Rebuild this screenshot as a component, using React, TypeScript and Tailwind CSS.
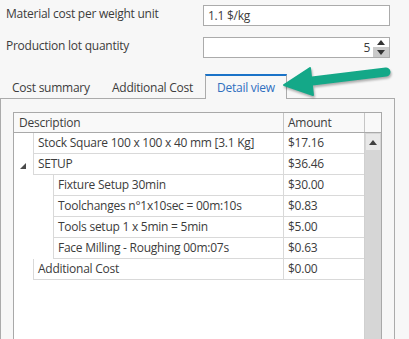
import React from "react";

type Row = { label: string; amount: string; level: number; expander?: boolean };

const rows: Row[] = [
  { label: "Stock Square 100 x 100 x 40 mm [3.1 Kg]", amount: "$17.16", level: 1 },
  { label: "SETUP", amount: "$36.46", level: 1, expander: true },
  { label: "Fixture Setup 30min", amount: "$30.00", level: 2 },
  { label: "Toolchanges n°1x10sec = 00m:10s", amount: "$0.83", level: 2 },
  { label: "Tools setup 1 x 5min = 5min", amount: "$5.00", level: 2 },
  { label: "Face Milling - Roughing 00m:07s", amount: "$0.63", level: 2 },
  { label: "Additional Cost", amount: "$0.00", level: 1 },
];

const TreeRow = ({ row }: { row: Row }) => {
  return (
    <div className="flex h-[21px]">
      {/* indent area */}
      <div
        className={
          row.level === 2 ? "w-[39px] shrink-0" : "w-[19px] shrink-0 flex items-center justify-center"
        }
      >
        {row.expander && (
          <svg width="6" height="6" viewBox="0 0 6 6" className="ml-[-2px] mt-[2px]">
            <path d="M6 0 L6 6 L0 6 Z" fill="#4a4a4a" />
          </svg>
        )}
      </div>
      <div className="flex flex-1 border-l border-b border-[#d9d9d9]">
        <div className="flex-1 pl-[4px] leading-[20px] whitespace-nowrap">{row.label}</div>
        <div className="w-[81px] shrink-0 border-l border-[#d9d9d9] pl-[4px] leading-[20px]">
          {row.amount}
        </div>
      </div>
    </div>
  );
};

const App = () => {
  return (
    <div
      className="relative w-[409px] h-[339px] overflow-hidden bg-[#f7f7f7] text-[12px] tracking-[-0.25px] text-[#3c3c3c]"
      style={{ fontFamily: "'Open Sans', 'Noto Sans', sans-serif" }}
    >
      {/* form rows */}
      <div className="flex flex-col gap-[11px] pt-[5px]">
        <div className="flex items-center h-[21px]">
          <div className="w-[203px] pl-[6px] -mt-[4px]">Material cost per weight unit</div>
          <div className="w-[187px] h-[21px] border border-[#ababab] bg-white pl-[4px] leading-[19px]">
            1.1 $/kg
          </div>
        </div>
        <div className="flex items-center h-[21px]">
          <div className="w-[203px] pl-[6px] -mt-[4px]">Production lot quantity</div>
          <div className="w-[187px] h-[21px] border border-[#ababab] bg-white flex">
            <div className="flex-1 text-right pr-[3px] leading-[19px]">5</div>
            <div className="w-[16px] flex flex-col">
              <div className="h-[9px] flex items-center justify-center">
                <svg width="8" height="5" viewBox="0 0 8 5">
                  <path d="M4 0 L8 5 L0 5 Z" fill="#333" />
                </svg>
              </div>
              <div className="flex-1 bg-[#c9c9c9] flex items-center justify-center">
                <svg width="8" height="5" viewBox="0 0 8 5">
                  <path d="M0 0 L8 0 L4 5 Z" fill="#333" />
                </svg>
              </div>
            </div>
          </div>
        </div>
      </div>

      {/* tabs */}
      <div className="flex items-end mt-[16px] h-[24px]">
        <div className="pl-[12px] w-[112px] pb-[1px]">Cost summary</div>
        <div className="w-[93px] pb-[1px]">Additional Cost</div>
        <div className="w-[82px] h-[25px] border-t-2 border-x border-t-[#1a73c8] border-x-[#ababab] bg-[#f7f7f7] pl-[11px] pt-[3px] text-[#2f6fbf] relative top-[1px]">
          Detail view
        </div>
      </div>

      {/* tab panel */}
      <div className="w-[395px] h-[260px] border border-[#ababab] bg-[#f7f7f7] pl-[12px] pt-[13px]">
        <div className="w-[369px] h-[240px] border border-[#a9a9a9] bg-white flex flex-col">
          {/* header */}
          <div className="flex h-[20px] border-b border-[#a9a9a9] bg-[#f9f9f9]">
            <div className="w-[269px] pl-[5px] leading-[19px]">Description</div>
            <div className="w-[81px] border-l border-[#c6c6c6] pl-[4px] leading-[19px]">Amount</div>
            <div className="flex-1 border-l border-[#c6c6c6]" />
          </div>
          <div className="flex flex-1">
            <div className="w-[350px]">
              {rows.map((r, i) => (
                <TreeRow key={i} row={r} />
              ))}
            </div>
            {/* scrollbar */}
            <div className="flex-1 border-l border-[#d0d0d0] bg-[#d6d6d6] flex flex-col">
              <div className="h-[16px] mx-[1px] mt-[1px] bg-[#e8e8e8] flex items-center justify-center">
                <svg width="8" height="5" viewBox="0 0 8 5">
                  <path d="M4 0 L8 5 L0 5 Z" fill="#404040" />
                </svg>
              </div>
            </div>
          </div>
        </div>
      </div>

      {/* callout arrow */}
      <svg
        className="absolute left-0 top-0 pointer-events-none drop-shadow-[1px_2px_1px_rgba(0,0,0,0.3)]"
        width="409"
        height="339"
      >
        <line x1="304" y1="82" x2="386" y2="72" stroke="#14a888" strokeWidth="9" strokeLinecap="round" />
        <path d="M284 85 L310 68 L313 95 Z" fill="#14a888" stroke="#14a888" strokeWidth="2" strokeLinejoin="round" />
      </svg>
    </div>
  );
};

export default App;
